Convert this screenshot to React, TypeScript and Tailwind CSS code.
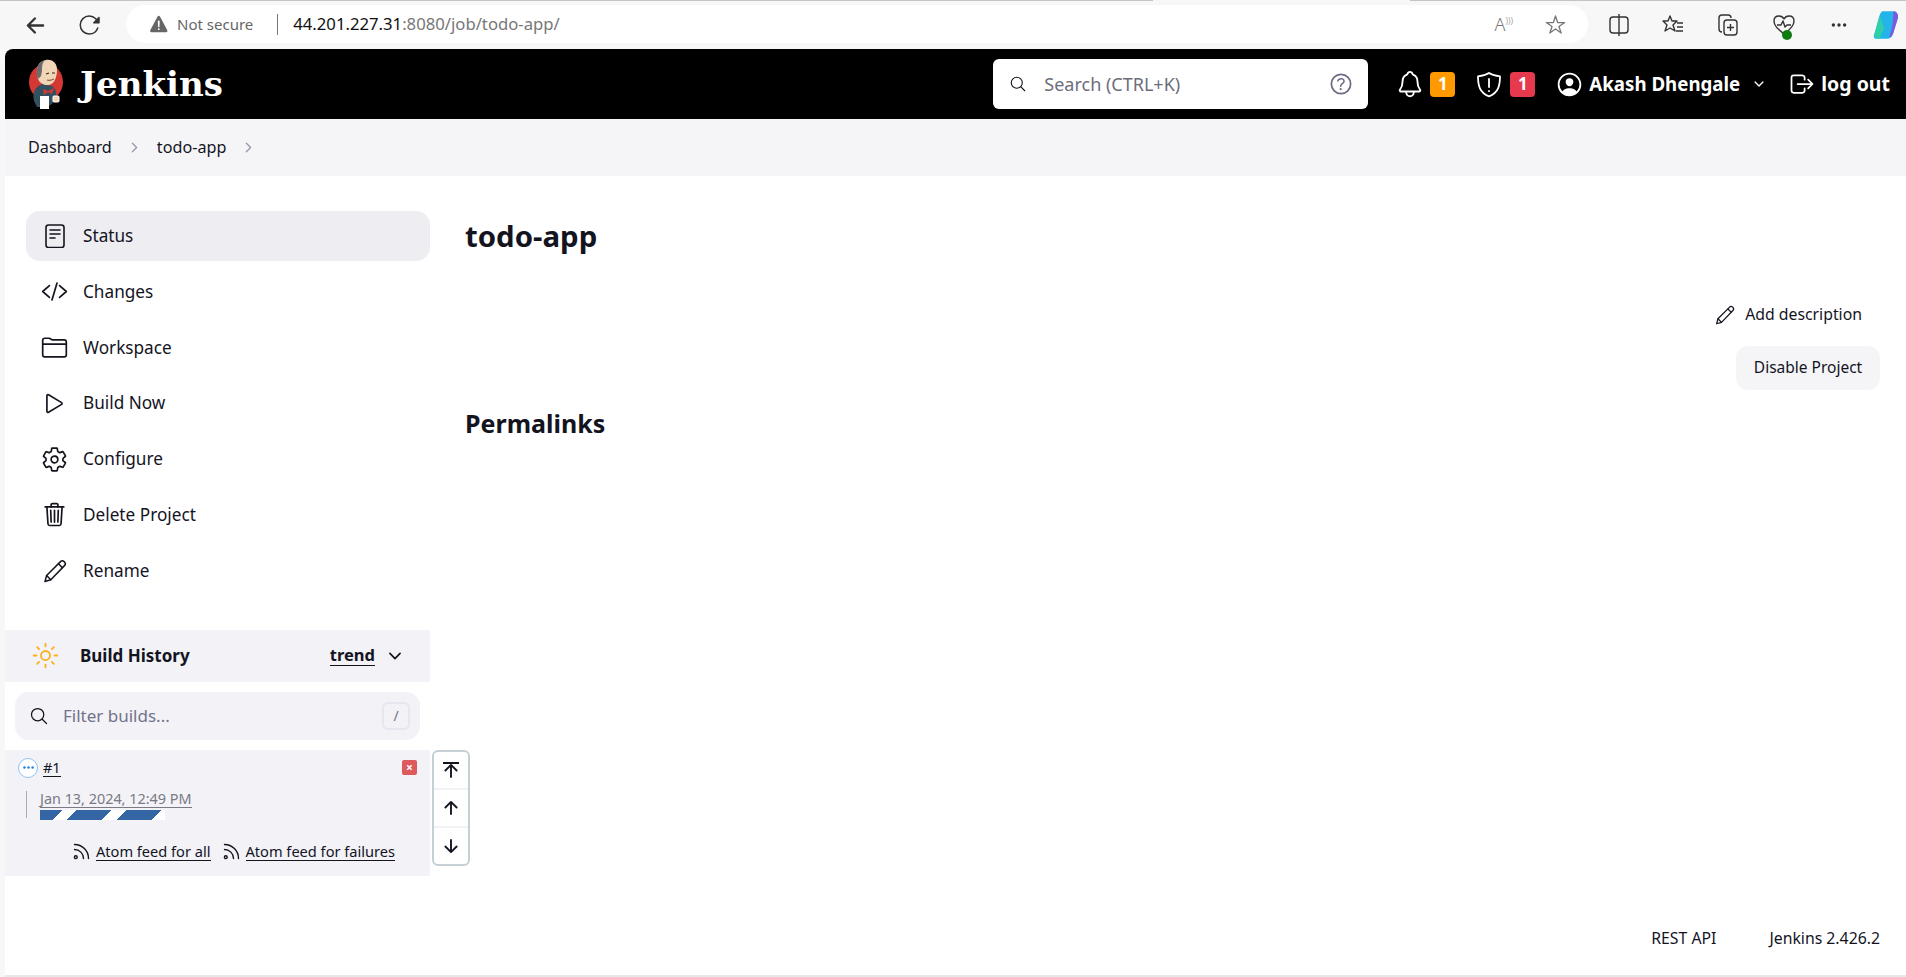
import { ReactNode } from 'react';
import {
  IoArrowBack,
  IoArrowDownOutline,
  IoArrowUpOutline,
  IoChevronDownOutline,
  IoChevronForwardOutline,
  IoCodeSlashOutline,
  IoEllipsisHorizontal,
  IoFolderOutline,
  IoHelpCircleOutline,
  IoLogOutOutline,
  IoNotificationsOutline,
  IoPersonCircleOutline,
  IoPlayOutline,
  IoReloadOutline,
  IoSearchOutline,
  IoSettingsOutline,
  IoStarOutline,
  IoSunnyOutline,
  IoTrashOutline,
  IoWarning,
} from 'react-icons/io5';

const PencilIcon = ({ size }: { size: number }) => (
  <svg width={size} height={size} viewBox="0 0 24 24" fill="none" stroke="currentColor" strokeWidth="1.5" strokeLinejoin="round" strokeLinecap="round">
    <path d="M2 22.500l1.600-6L17.500 2.600c1-1 2.600-1 3.600 0l.4.4c1 1 1 2.600 0 3.600L7.800 20.800z" />
    <path d="M3.600 16.500l4.200 4.300" />
    <path d="M15.500 4.800l3.800 3.800" />
  </svg>
);

const DocIcon = () => (
  <svg width="20" height="24" viewBox="0 0 20 24" fill="none" stroke="currentColor" strokeWidth="1.6" strokeLinecap="round">
    <rect x="1" y="1" width="18" height="22.500" rx="2.500" />
    <path d="M5 6h10M5 10h10M5 14h5" />
  </svg>
);

const TASKS: { label: string; icon: ReactNode; active?: boolean }[] = [
  { label: 'Status', icon: <DocIcon />, active: true },
  { label: 'Changes', icon: <IoCodeSlashOutline size={27} /> },
  { label: 'Workspace', icon: <IoFolderOutline size={27} /> },
  { label: 'Build Now', icon: <IoPlayOutline size={27} /> },
  { label: 'Configure', icon: <IoSettingsOutline size={27} /> },
  { label: 'Delete Project', icon: <IoTrashOutline size={27} /> },
  { label: 'Rename', icon: <PencilIcon size={24} /> },
];

const RssIcon = () => (
  <svg width="17" height="17" viewBox="0 0 17 17" fill="none" stroke="#14141f" strokeWidth="1.4" strokeLinecap="round">
    <path d="M1.500 6.500c5 0 9 4 9 9" />
    <path d="M1.500 1.500c7.700 0 14 6.300 14 14" />
    <circle cx="2.800" cy="14.200" r="1.400" />
  </svg>
);

const JenkinsLogo = () => (
  <svg width="36" height="50" viewBox="0 0 36 50">
    <ellipse cx="18" cy="23" rx="17" ry="18" fill="#d33833" />
    <path d="M6 42c-2-8 1-14 8-17l10 2c4 3 5 7 4 14l-8 7H9z" fill="#335061" />
    <path d="M10 20C7 10 10 2 18 1c7-1 12 4 11 12-1 8-4 13-9 13-5 0-8-2-10-6z" fill="#f0d6b7" />
    <path d="M10 20C7 12 9 3 17 1c-3 3-3 7-3 11l-1 5z" fill="#6d6b6d" />
    <path d="M18 15l3-1M24 14l3 0" stroke="#3a2a20" strokeWidth="1.200" />
    <path d="M19 21c3 1 5 0 7-1" stroke="#8a5a44" strokeWidth="1.200" fill="none" />
    <path d="M15 30l5 2 6-3-2 6-4-2-4 3z" fill="#d33833" />
    <rect x="12" y="37" width="9" height="13" fill="#fff" />
    <rect x="25" y="37" width="6" height="6" rx="1" fill="#f0d6b7" stroke="#fff" />
  </svg>
);

const ShieldAlert = () => (
  <svg width="26" height="27" viewBox="0 0 26 27" fill="none" stroke="#fff" strokeWidth="1.800" strokeLinejoin="round" strokeLinecap="round">
    <path d="M13 2c3 2 6.500 3 11 3.300 0 9-1.500 16.500-11 20-9.500-3.500-11-11-11-20C6.500 5 10 4 13 2z" />
    <path d="M13 8v8" />
    <path d="M13 20v.2" />
  </svg>
);

const Badge = ({ color, gap, children }: { color: string; gap: string; children: ReactNode }) => (
  <span
    className={`flex h-[25px] w-[25px] items-center justify-center rounded-[4px] text-[17px] font-bold text-white ${gap} ${color}`}
  >
    {children}
  </span>
);

const Chrome = () => (
  <div className="h-[49px] shrink-0 bg-[#f7f7f7]">
    <div className="flex h-[1px]">
      <div className="w-[1153px] bg-[#c4c4c4]" />
      <div className="w-[257px]" />
      <div className="flex-1 bg-[#c4c4c4]" />
    </div>
    <div className="flex h-[48px] items-center pl-[23px] text-[#333]">
      <IoArrowBack size={25} className="mr-[30px]" />
      <IoReloadOutline size={24} className="mr-[24px]" />
      <div className="flex h-[38px] w-[1462px] -translate-y-[1px] items-center rounded-full bg-white pl-[22px] pr-[22px]">
        <IoWarning size={22} className="text-[#666]" />
        <span className="ml-[7px] text-[15px] text-[#666]">Not secure</span>
        <span className="ml-[24px] h-[21px] w-[1px] bg-[#777]" />
        <span className="ml-[15px] text-[16.700px] text-[#111]">44.201.227.31</span>
        <span className="text-[16.700px] text-[#777]">:8080/job/todo-app/</span>
        <span className="ml-auto flex items-center text-[#777]">
          <span className="mr-[32px] text-[18px] font-light">
            A<span className="align-super text-[9px]">)))</span>
          </span>
          <IoStarOutline size={21} />
        </span>
      </div>
      <div className="ml-[21px] flex items-center gap-[33px]">
        <svg width="20" height="22" viewBox="0 0 20 22" fill="none" stroke="#333" strokeWidth="1.400">
          <rect x="1" y="3" width="18" height="16" rx="3" />
          <path d="M10 0v22" />
        </svg>
        <svg width="22" height="22" viewBox="0 0 22 22" fill="none" stroke="#333" strokeWidth="1.400" strokeLinejoin="round">
          <path d="M8 2l2 5h5l-4 4 2 6-5-3-5 3 2-6-4-4h5z" />
          <path d="M15 9h6M15 13h6M14 17h7" />
        </svg>
        <svg width="22" height="24" viewBox="0 0 22 24" fill="none" stroke="#333" strokeWidth="1.400">
          <path d="M5 19c-2 0-3-1-3-3V5c0-2 1-3 3-3h6c2 0 3 1 3 3" />
          <rect x="7" y="7" width="13" height="15" rx="3" />
          <path d="M13.500 11v7M10 14.500h7" />
        </svg>
        <span className="relative">
          <svg width="24" height="24" viewBox="0 0 24 24" fill="none" stroke="#333" strokeWidth="1.400" strokeLinejoin="round">
            <path d="M12 21C6 16 2 13 2 8c0-3 2-5 5-5 2 0 4 1 5 3 1-2 3-3 5-3 3 0 5 2 5 5 0 5-4 8-10 13z" />
            <path d="M5 12h4l2-4 2 6 2-2h4" />
          </svg>
          <span className="absolute bottom-[-3px] right-[4px] h-[10px] w-[10px] rounded-full bg-[#107c10]" />
        </span>
        <IoEllipsisHorizontal size={18} className="ml-[1px]" />
      </div>
      <svg className="ml-[24px]" width="28" height="32" viewBox="0 0 24 30">
        <path d="M9 2h10c3 0 5 3 4 7l-4 13c-1 4-3 6-7 6H3c-2 0-3-2-2-4l5-18C7 3 8 2 9 2z" fill="#25b4e8" />
        <path d="M19 2c3 0 5 3 4 7l-4 13c-1 3-2 4-4 5l3-12z" fill="#7a5ae0" />
        <path d="M6 28c-3 0-5-2-5-4l5-18 4 12z" fill="#2fd0a8" />
      </svg>
    </div>
  </div>
);

const Header = () => (
  <header className="flex h-[70px] shrink-0 items-center bg-black pl-[23px] pr-[16px] text-white">
    <JenkinsLogo />
    <span className="ml-[16px] font-['DejaVu_Serif',serif] text-[34px] font-bold">Jenkins</span>
    <div className="ml-auto flex h-[50px] w-[375px] items-center rounded-[6px] bg-white pl-[16px] pr-[13px] text-[#14141f]">
      <IoSearchOutline size={18} />
      <span className="ml-[17px] text-[18px] text-[#6d6d7a]">Search (CTRL+K)</span>
      <IoHelpCircleOutline size={28} className="ml-auto text-[#6d6b85]" />
    </div>
    <IoNotificationsOutline size={30} className="ml-[27px]" />
    <Badge color="bg-[#fe9a00]" gap="ml-[5px]">1</Badge>
    <span className="ml-[21px]">
      <ShieldAlert />
    </span>
    <Badge color="bg-[#e6394d]" gap="ml-[8px]">1</Badge>
    <IoPersonCircleOutline size={29} className="ml-[20px]" />
    <span className="ml-[5px] text-[18.700px] font-bold">Akash Dhengale</span>
    <IoChevronDownOutline size={14} className="ml-[12px]" />
    <IoLogOutOutline size={28} className="ml-[22px]" />
    <span className="ml-[5px] text-[19.500px] font-bold">log out</span>
  </header>
);

const Breadcrumb = () => (
  <nav className="flex h-[57px] shrink-0 items-center bg-[#f5f5f8] pl-[23px] text-[16.200px] text-[#14141f]">
    <span>Dashboard</span>
    <IoChevronForwardOutline size={15} className="mx-[15px] text-[#9a9aac]" />
    <span>todo-app</span>
    <IoChevronForwardOutline size={15} className="ml-[15px] text-[#9a9aac]" />
  </nav>
);

const BuildHistory = () => (
  <section className="relative mt-[34px]">
    <div className="flex h-[52px] items-center bg-[#f2f2f7] pl-[26px] pr-[26px] text-[#14141f]">
      <IoSunnyOutline size={29} className="text-[#feb018]" />
      <span className="ml-[20px] text-[17px] font-bold">Build History</span>
      <span className="ml-auto border-b-[1.500px] border-[#14141f] text-[16.500px] font-bold leading-[20px]">trend</span>
      <IoChevronDownOutline size={18} className="ml-[11px]" />
    </div>
    <div className="mx-[10px] mt-[10px] flex h-[48px] items-center rounded-[14px] bg-[#f2f2f7] pl-[14px] pr-[10px]">
      <IoSearchOutline size={20} className="text-[#14141f]" />
      <span className="ml-[14px] text-[17px] text-[#73738a]">Filter builds...</span>
      <span className="ml-auto flex h-[28px] w-[28px] items-center justify-center rounded-[6px] border-2 border-[#e6e6ef] text-[14px] text-[#73738a]">
        /
      </span>
    </div>
    <div className="mt-[10px] h-[126px] bg-[#f2f2f7] pl-[13px] pr-[13px] pt-[7px]">
      <div className="flex h-[22px] items-center">
        <span className="flex h-[20px] w-[20px] items-center justify-center rounded-full border-[1.500px] border-[#8fc1f5] bg-white text-[#1d7fe0]">
          <IoEllipsisHorizontal size={13} />
        </span>
        <span className="ml-[5px] border-b border-[#14141f] text-[14.500px] leading-[18px] text-[#14141f]">#1</span>
        <span className="ml-auto flex h-[15px] w-[15px] items-center justify-center rounded-[2px] bg-[#dc5a5c] text-[12px] font-bold leading-none text-white">
          ×
        </span>
      </div>
      <div className="ml-[8px] mt-[12px] h-[27px] border-l border-[#a4acb4] pl-[13px]">
        <span className="block w-fit border-b border-[#7a7a85] text-[14.400px] leading-[16px] text-[#7a7a85]">
          Jan 13, 2024, 12:49 PM
        </span>
        <div className="mt-[2px] h-[10px] w-[125px] bg-[repeating-linear-gradient(-45deg,#ffffff_0,#ffffff_9.200px,#3465a4_9.200px,#3465a4_34.200px,#ffffff_34.200px,#ffffff_35.350px)]" />
      </div>
      <div className="mt-[25px] flex items-center justify-end pr-[22px] text-[14.600px] text-[#14141f]">
        <RssIcon />
        <span className="ml-[6px] border-b border-[#14141f] leading-[17px]">Atom feed for all</span>
        <span className="ml-[12px]">
          <RssIcon />
        </span>
        <span className="ml-[6px] border-b border-[#14141f] leading-[17px]">Atom feed for failures</span>
      </div>
    </div>
    <div className="absolute left-[427px] top-[120px] flex h-[116px] w-[38px] flex-col divide-y-2 divide-[#f2f2f4] rounded-[6px] border-2 border-[#c4d0d4] bg-white text-[#14141f]">
      <button className="relative flex flex-1 items-center justify-center">
        <span className="absolute left-[9px] top-[10px] h-[2px] w-[16px] bg-[#14141f]" />
        <IoArrowUpOutline size={20} className="mt-[3px]" />
      </button>
      <button className="flex flex-1 items-center justify-center">
        <IoArrowUpOutline size={20} />
      </button>
      <button className="flex flex-1 items-center justify-center">
        <IoArrowDownOutline size={20} />
      </button>
    </div>
  </section>
);

const Sidebar = () => (
  <aside className="w-[425px] shrink-0 pt-[35px]">
    <ul className="flex flex-col gap-[5.800px] pl-[21px]">
      {TASKS.map((task) => (
        <li
          key={task.label}
          className={`flex h-[50px] items-center rounded-[14px] text-[17.200px] text-[#14141f] ${
            task.active ? 'bg-[#ededf2]' : ''
          }`}
        >
          <span className="flex w-[57px] items-center justify-center">{task.icon}</span>
          {task.label}
        </li>
      ))}
    </ul>
    <BuildHistory />
  </aside>
);

const Main = () => (
  <main className="flex-1 pl-[35px] pr-[26px] text-[#14141f]">
    <h1 className="mt-[38px] h-[44px] text-[29.400px] font-bold leading-[44px]">todo-app</h1>
    <div className="mt-[45px] flex items-center justify-end text-[15.800px]">
      <PencilIcon size={20} />
      <span className="ml-[10px] mr-[18px]">Add description</span>
    </div>
    <div className="mt-[19px] flex justify-end">
      <button className="h-[44px] w-[144px] rounded-[12px] bg-[#f5f5f8] text-[15.500px]">Disable Project</button>
    </div>
    <h2 className="mt-[15px] h-[36px] text-[25px] font-bold leading-[36px]">Permalinks</h2>
  </main>
);

const App = () => (
  <div className="flex h-[977px] flex-col overflow-hidden bg-[#f7f7f7] font-['Noto_Sans','Open_Sans',sans-serif]">
    <Chrome />
    <div className="ml-[5px] flex flex-1 flex-col overflow-hidden rounded-tl-[8px] border-b-2 border-[#e8e8e8] bg-white">
      <Header />
      <Breadcrumb />
      <div className="flex flex-1">
        <Sidebar />
        <Main />
      </div>
      <footer className="flex h-[50px] shrink-0 items-start justify-end gap-[53px] pr-[26px] pt-[2px] text-[15.800px] text-[#14141f]">
        <span>REST API</span>
        <span>Jenkins 2.426.2</span>
      </footer>
    </div>
  </div>
);

export default App;
